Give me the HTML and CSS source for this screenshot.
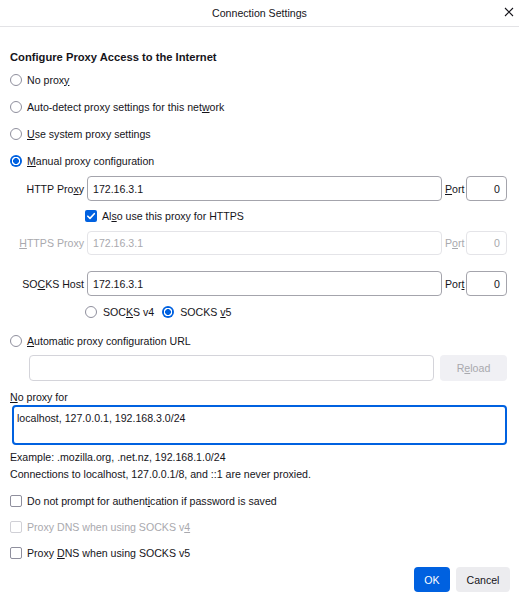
FILE: index.html
```html
<!DOCTYPE html>
<html lang="en">
<head>
<meta charset="utf-8">
<title>Connection Settings</title>
<link rel="stylesheet" href="styles.css">
</head>
<body>
<div class="dialog">
  <header class="titlebar">
    <span class="spacer"></span>
    <span class="title">Connection Settings</span>
    <span class="close">
      <svg width="10" height="10" viewBox="0 0 10 10"><path d="M1 1 L9 9 M9 1 L1 9" stroke="#15141a" stroke-width="1.1" fill="none"/></svg>
    </span>
  </header>

  <main class="content">
    <h1 class="heading">Configure Proxy Access to the Internet</h1>

    <div class="choice"><span class="radio"></span><span>No prox<u>y</u></span></div>
    <div class="choice"><span class="radio"></span><span>Auto-detect proxy settings for this net<u>w</u>ork</span></div>
    <div class="choice"><span class="radio"></span><span><u>U</u>se system proxy settings</span></div>
    <div class="choice"><span class="radio checked"></span><span><u>M</u>anual proxy configuration</span></div>

    <div class="proxy-row row-http">
      <span class="plabel">HTTP Pro<u>x</u>y</span>
      <span class="field">172.16.3.1</span>
      <span class="port-label"><u>P</u>ort</span>
      <span class="field port">0</span>
    </div>

    <div class="sub-check">
      <span class="checkbox checked"><svg width="12" height="12" viewBox="0 0 12 12"><path d="M2.8 6.2 L5 8.4 L9.3 3.7" stroke="#fff" stroke-width="1.6" fill="none" stroke-linecap="round" stroke-linejoin="round"/></svg></span>
      <span>Al<u>s</u>o use this proxy for HTTPS</span>
    </div>

    <div class="proxy-row row-https disabled">
      <span class="plabel"><u>H</u>TTPS Proxy</span>
      <span class="field">172.16.3.1</span>
      <span class="port-label">P<u>o</u>rt</span>
      <span class="field port">0</span>
    </div>

    <div class="proxy-row row-socks">
      <span class="plabel">SO<u>C</u>KS Host</span>
      <span class="field">172.16.3.1</span>
      <span class="port-label">Por<u>t</u></span>
      <span class="field port">0</span>
    </div>

    <div class="socks-versions">
      <span class="radio"></span><span class="ver">SOC<u>K</u>S v4</span>
      <span class="radio checked"></span><span class="ver">SOCKS <u>v</u>5</span>
    </div>

    <div class="choice auto"><span class="radio"></span><span><u>A</u>utomatic proxy configuration URL</span></div>

    <div class="url-row">
      <span class="field url"></span>
      <span class="btn reload">R<u>e</u>load</span>
    </div>

    <div class="noproxy-label"><u>N</u>o proxy for</div>
    <div class="textarea">localhost, 127.0.0.1, 192.168.3.0/24</div>

    <div class="hint first">Example: .mozilla.org, .net.nz, 192.168.1.0/24</div>
    <div class="hint">Connections to localhost, 127.0.0.1/8, and ::1 are never proxied.</div>

    <div class="check-row first"><span class="checkbox"></span><span>Do not prompt for authent<u>i</u>cation if password is saved</span></div>
    <div class="check-row disabled"><span class="checkbox"></span><span>Proxy DNS when using SOCKS v<u>4</u></span></div>
    <div class="check-row"><span class="checkbox"></span><span>Proxy <u>D</u>NS when using SOCKS v5</span></div>

    <div class="buttons">
      <span class="btn primary">OK</span>
      <span class="btn secondary">Cancel</span>
    </div>
  </main>
</div>
</body>
</html>
```

FILE: styles.css
```css
* { box-sizing: border-box; }

html, body {
  margin: 0;
  padding: 0;
  background: #ffffff;
}

body {
  font-family: "Liberation Sans", Arial, sans-serif;
  font-size: 10.6px;
  color: #15141a;
  width: 519px;
  height: 599px;
  overflow: hidden;
}

u { text-decoration: underline; text-underline-offset: 1px; }

.titlebar {
  display: grid;
  grid-template-columns: 1fr auto 1fr;
  align-items: center;
  height: 27px;
  border-bottom: 1px solid #e3e3e6;
}

.title { font-size: 10.6px; padding-bottom: 1px; }

.close {
  justify-self: end;
  margin-right: 5px;
  display: flex;
  padding-bottom: 2px;
}

.content {
  padding: 0 12px 0 10px;
}

.heading {
  margin: 22px 0 0;
  height: 17px;
  line-height: 16px;
  font-size: 11.2px;
  font-weight: bold;
}

.choice {
  display: flex;
  align-items: center;
  gap: 5px;
  height: 27px;
}

.radio {
  width: 12px;
  height: 12px;
  border: 1px solid #8f8f9d;
  border-radius: 50%;
  background: #fff;
  flex: none;
}

.radio.checked {
  border: none;
  background: radial-gradient(circle, #0061e0 0 2.7px, #ffffff 3.1px 4.1px, #0061e0 4.5px);
}

.checkbox {
  width: 12px;
  height: 12px;
  border: 1px solid #8f8f9d;
  border-radius: 2px;
  background: #fff;
  flex: none;
  display: flex;
}

.checkbox.checked {
  border: none;
  background: #0061e0;
}

.proxy-row {
  display: grid;
  grid-template-columns: 74px 1fr 18px 41px;
  column-gap: 3px;
  height: 25px;
}

.row-http { margin-top: 2px; }
.row-https { margin-top: 3px; height: 24px; }
.row-socks { margin-top: 16px; }

.plabel {
  align-self: center;
  text-align: right;
  white-space: nowrap;
}

.port-label {
  align-self: center;
  white-space: nowrap;
}

.field {
  display: flex;
  align-items: center;
  border: 1px solid #a4a4ac;
  border-radius: 4px;
  padding: 0 5px;
  background: #fff;
}

.field.port {
  justify-content: flex-end;
  padding-right: 6px;
}

.disabled { color: #a9a9ae; }
.disabled .field { border-color: #e4e4e8; }
.disabled .checkbox { border-color: #d0d0d6; }

.sub-check {
  display: flex;
  align-items: center;
  gap: 5px;
  height: 25px;
  margin-top: 2px;
  padding-left: 75px;
}

.socks-versions {
  display: flex;
  align-items: center;
  height: 26px;
  margin-top: 3px;
  padding-left: 75px;
}

.socks-versions .ver { margin: 0 8px 0 6px; }

.choice.auto { margin-top: 3px; height: 26px; }

.url-row {
  display: flex;
  gap: 6px;
  height: 26px;
  margin-top: 1px;
  padding-left: 19px;
}

.field.url { flex: 1; border-color: #d4d4da; }

.btn {
  display: flex;
  align-items: center;
  justify-content: center;
  border-radius: 4px;
}

.reload {
  width: 67px;
  background: #f0f0f4;
  color: #a9a9ae;
}

.noproxy-label {
  margin-top: 8px;
  line-height: 16px;
}

.textarea {
  margin: 0 0 0 2px;
  height: 40px;
  border: 2px solid #0061e0;
  border-radius: 4px;
  padding: 3px 3px;
  line-height: 16px;
}

.hint { line-height: 17px; }
.hint.first { margin-top: 4px; }

.check-row {
  display: flex;
  align-items: center;
  gap: 5px;
  height: 26px;
}

.check-row.first { margin-top: 4.5px; }

.buttons {
  display: flex;
  justify-content: flex-end;
  gap: 6px;
  height: 25px;
  margin-top: 1.5px;
  margin-right: -3px;
}

.primary {
  width: 36px;
  background: #0061e0;
  color: #ffffff;
}

.secondary {
  width: 54px;
  background: #ececef;
  color: #15141a;
}
```
